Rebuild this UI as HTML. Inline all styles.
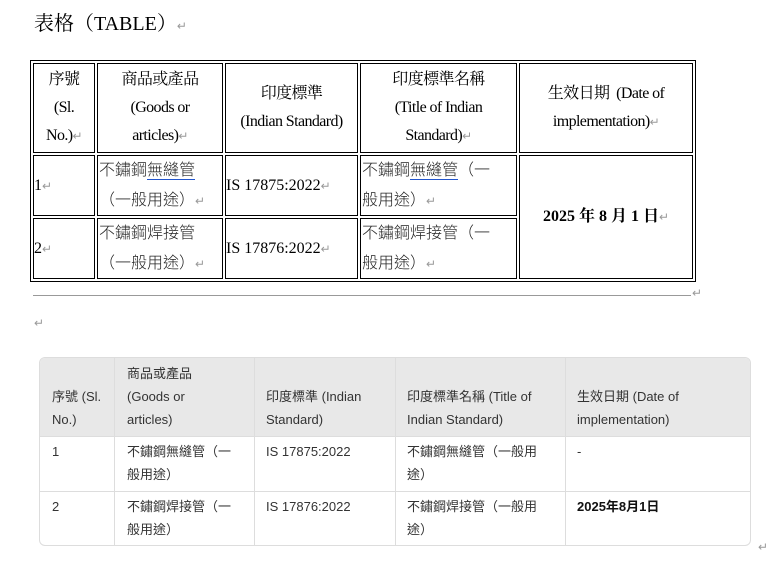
<!DOCTYPE html>
<html><head><meta charset="utf-8"><style>
body{margin:0;width:783px;height:574px;background:#fff;position:relative;overflow:hidden;font-family:"Liberation Serif","Noto Serif CJK SC",serif;color:#000}
.a{position:absolute}
.c{position:absolute;border:1px solid #000;box-sizing:border-box;font-size:16px;line-height:28px}
.m{color:#999;font-size:12px;font-weight:normal}
.h{text-align:center;display:flex;align-items:center;justify-content:center;letter-spacing:-0.6px}
.s{font-family:"Liberation Sans","Noto Sans CJK TC",sans-serif;font-weight:300;color:#222;font-size:16px;line-height:30px;padding-left:1px}
.b{position:absolute;font-family:"Liberation Sans","Noto Sans CJK TC",sans-serif;font-size:13px;line-height:23px;color:#333}
.v{position:absolute;top:357px;width:1px;height:189px;background:#ddd}
.u{border-bottom:1px solid #2255cc}
</style></head><body>
<div class="a" style="left:34px;top:8px;font-size:20px;line-height:32px">表格（TABLE）<span class="m">↵</span></div>
<div class="a" style="left:30px;top:60px;width:666px;height:222px;border:1px solid #000;box-sizing:border-box"></div>
<div class="c h" style="left:33px;top:63px;width:62px;height:90px"><div>序號<br>(Sl.<br>No.)<span class="m">↵</span></div></div>
<div class="c h" style="left:97px;top:63px;width:126px;height:90px"><div>商品或產品<br>(Goods or<br>articles)<span class="m">↵</span></div></div>
<div class="c h" style="left:225px;top:63px;width:133px;height:90px"><div>印度標準<br>(Indian Standard)</div></div>
<div class="c h" style="left:360px;top:63px;width:157px;height:90px"><div>印度標準名稱<br>(Title of Indian<br>Standard)<span class="m">↵</span></div></div>
<div class="c h" style="left:519px;top:63px;width:174px;height:90px"><div>生效日期&nbsp; (Date of<br>implementation)<span class="m">↵</span></div></div>
<div class="c" style="left:33px;top:155px;width:62px;height:61px;display:flex;align-items:center">1<span class="m">↵</span></div>
<div class="c s" style="left:97px;top:155px;width:126px;height:61px;white-space:nowrap">不鏽鋼<span class="u">無縫管</span><br>（一般用途）<span class="m">↵</span></div>
<div class="c" style="left:225px;top:155px;width:133px;height:61px;display:flex;align-items:center">IS 17875:2022<span class="m">↵</span></div>
<div class="c s" style="left:360px;top:155px;width:157px;height:61px;white-space:nowrap">不鏽鋼<span class="u">無縫管</span>（一<br>般用途）<span class="m">↵</span></div>
<div class="c h" style="left:519px;top:155px;width:174px;height:124px;font-weight:bold;letter-spacing:0">2025 年 8 月 1 日<span class="m">↵</span></div>
<div class="c" style="left:33px;top:218px;width:62px;height:61px;display:flex;align-items:center">2<span class="m">↵</span></div>
<div class="c s" style="left:97px;top:218px;width:126px;height:61px;white-space:nowrap">不鏽鋼焊接管<br>（一般用途）<span class="m">↵</span></div>
<div class="c" style="left:225px;top:218px;width:133px;height:61px;display:flex;align-items:center">IS 17876:2022<span class="m">↵</span></div>
<div class="c s" style="left:360px;top:218px;width:157px;height:61px;white-space:nowrap">不鏽鋼焊接管（一<br>般用途）<span class="m">↵</span></div>
<div class="a" style="left:33px;top:295px;width:658px;height:1px;background:#999"></div>
<div class="a m" style="left:692px;top:286px">↵</div>
<div class="a m" style="left:34px;top:316px">↵</div>

<div class="a" style="left:39px;top:357px;width:712px;height:189px;border:1px solid #ddd;border-radius:6px;box-sizing:border-box;overflow:hidden">
<div style="height:78px;background:#e8e8e8;border-bottom:1px solid #ddd"></div>
<div style="height:54px;border-bottom:1px solid #ddd"></div>
</div>
<div class="v" style="left:114px"></div><div class="v" style="left:254px"></div><div class="v" style="left:395px"></div><div class="v" style="left:565px"></div>
<div class="b" style="left:52px;top:385px">序號 (Sl.<br>No.)</div>
<div class="b" style="left:127px;top:362px">商品或產品<br>(Goods or<br>articles)</div>
<div class="b" style="left:266px;top:385px">印度標準 (Indian<br>Standard)</div>
<div class="b" style="left:407px;top:385px">印度標準名稱 (Title of<br>Indian Standard)</div>
<div class="b" style="left:577px;top:385px">生效日期 (Date of<br>implementation)</div>
<div class="b" style="left:52px;top:440px">1</div>
<div class="b" style="left:127px;top:440px">不鏽鋼無縫管（一<br>般用途）</div>
<div class="b" style="left:266px;top:440px">IS 17875:2022</div>
<div class="b" style="left:407px;top:440px">不鏽鋼無縫管（一般用<br>途）</div>
<div class="b" style="left:577px;top:440px">-</div>
<div class="b" style="left:52px;top:495px">2</div>
<div class="b" style="left:127px;top:495px">不鏽鋼焊接管（一<br>般用途）</div>
<div class="b" style="left:266px;top:495px">IS 17876:2022</div>
<div class="b" style="left:407px;top:495px">不鏽鋼焊接管（一般用<br>途）</div>
<div class="b" style="left:577px;top:495px;font-weight:bold;color:#111">2025年8月1日</div>
<div class="a m" style="left:758px;top:540px">↵</div>
</body></html>
